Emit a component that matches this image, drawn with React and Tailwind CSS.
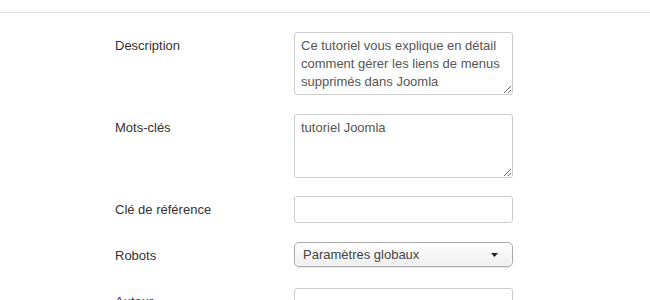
export default function App() {
  const font = { fontFamily: '"Liberation Sans", Arial, sans-serif' }

  return (
    <div className="h-[300px] w-[650px] overflow-hidden bg-white text-[13px] leading-[18px] text-[#333]" style={font}>
      <div className="pt-[12px]">
        <div className="h-[2px] border-t border-[#e3e3e3] border-b-white" />
      </div>

      <div className="pl-[115px] pt-[18px]">
        <div className="mb-[19px] flex">
          <label className="w-[179px] pt-[5px]">Description</label>
          <textarea
            readOnly
            className="h-[63px] w-[219px] resize rounded-[3px] border border-[#ccc] px-[6px] py-[4px] text-[#555] outline-none"
            defaultValue={"Ce tutoriel vous explique en détail\ncomment gérer les liens de menus\nsupprimés dans Joomla"}
          />
        </div>

        <div className="mb-[18px] flex">
          <label className="w-[179px] pt-[5px]">Mots-clés</label>
          <textarea
            readOnly
            className="h-[64px] w-[219px] resize rounded-[3px] border border-[#ccc] px-[6px] py-[4px] text-[#555] outline-none"
            defaultValue="tutoriel Joomla"
          />
        </div>

        <div className="mb-[19px] flex">
          <label className="w-[179px] pt-[5px]">Clé de référence</label>
          <input
            readOnly
            className="h-[27px] w-[219px] rounded-[3px] border border-[#ccc] px-[6px] text-[#555] outline-none"
          />
        </div>

        <div className="mb-[21px] flex">
          <label className="w-[179px] pt-[5px]">Robots</label>
          <div className="flex h-[25px] w-[219px] items-center justify-between rounded-[5px] border border-[#aaa] bg-gradient-to-b from-white to-[#eee] pl-[8px] pr-[14px] text-[#444] shadow-[inset_0_0_3px_white,0_1px_1px_rgba(0,0,0,0.1)]">
            <span>Paramètres globaux</span>
            <svg width="7" height="4" viewBox="0 0 7 4">
              <path d="M0 0h7L3.5 4z" fill="#222" />
            </svg>
          </div>
        </div>

        <div className="flex">
          <label className="w-[179px] pt-[5px]">Auteur</label>
          <input
            readOnly
            className="h-[27px] w-[219px] rounded-[3px] border border-[#ccc] px-[6px] text-[#555] outline-none"
          />
        </div>
      </div>
    </div>
  )
}
